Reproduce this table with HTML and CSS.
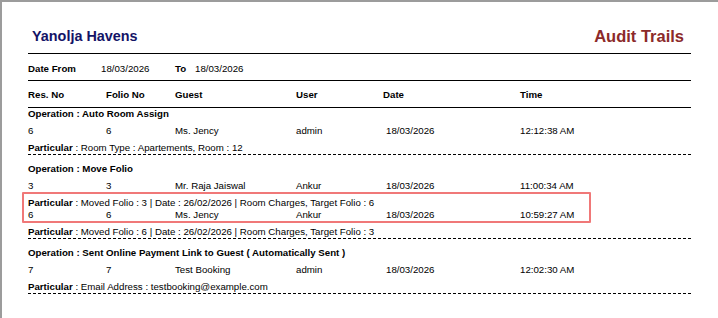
FILE: index.html
```html
<!DOCTYPE html>
<html lang="en">

<head>
    <meta charset="UTF-8">
    <meta name="viewport" content="width=device-width, initial-scale=1.0">
    <title>Audit Trails</title>
    <link rel="stylesheet" href="styles.css">
</head>

<body>
    <div class="page">
        <div class="report">
            <!-- Report header -->
            <div class="report-head">
                <h1 class="hotel-name">Yanolja Havens</h1>
                <h2 class="report-name">Audit Trails</h2>
            </div>

            <div class="filter-row">
                <span class="filter-label">Date From</span>
                <span class="filter-value">18/03/2026</span>
                <span class="filter-label to">To</span>
                <span>18/03/2026</span>
            </div>

            <div class="grid-row col-heads">
                <span>Res. No</span>
                <span>Folio No</span>
                <span>Guest</span>
                <span>User</span>
                <span>Date</span>
                <span>Time</span>
            </div>

            <div class="records">
                <!-- Auto Room Assign -->
                <div class="record first">
                    <div class="operation">Operation : Auto Room Assign</div>
                    <div class="grid-row data-row">
                        <span>6</span>
                        <span>6</span>
                        <span>Ms. Jency</span>
                        <span>admin</span>
                        <span class="date">18/03/2026</span>
                        <span>12:12:38 AM</span>
                    </div>
                    <div class="particular"><b>Particular</b> : Room Type : Apartements, Room : 12</div>
                </div>

                <!-- Move Folio -->
                <div class="record">
                    <div class="operation">Operation : Move Folio</div>
                    <div class="grid-row data-row">
                        <span>3</span>
                        <span>3</span>
                        <span>Mr. Raja Jaiswal</span>
                        <span>Ankur</span>
                        <span class="date">18/03/2026</span>
                        <span>11:00:34 AM</span>
                    </div>
                    <div class="particular no-rule"><b>Particular</b> : Moved Folio : 3 | Date : 26/02/2026 | Room Charges, Target Folio : 6</div>
                    <div class="grid-row data-row tight">
                        <span>6</span>
                        <span>6</span>
                        <span>Ms. Jency</span>
                        <span>Ankur</span>
                        <span class="date">18/03/2026</span>
                        <span>10:59:27 AM</span>
                    </div>
                    <div class="particular"><b>Particular</b> : Moved Folio : 6 | Date : 26/02/2026 | Room Charges, Target Folio : 3</div>
                    <div class="highlight"></div>
                </div>

                <!-- Payment link -->
                <div class="record">
                    <div class="operation">Operation : Sent Online Payment Link to Guest ( Automatically Sent )</div>
                    <div class="grid-row data-row">
                        <span>7</span>
                        <span>7</span>
                        <span>Test Booking</span>
                        <span>admin</span>
                        <span class="date">18/03/2026</span>
                        <span>12:02:30 AM</span>
                    </div>
                    <div class="particular"><b>Particular</b> : Email Address : testbooking@example.com</div>
                </div>
            </div>
        </div>
    </div>
</body>

</html>
```

FILE: styles.css
```css
body {
    margin: 0;
    padding: 0;
    font-family: "Liberation Sans", Arial, sans-serif;
    font-size: 9.7px;
    color: #000;
    background-color: #fff;
    overflow: hidden;
}

.page {
    border-top: 2px solid #9c9c9c;
    border-left: 2px solid #9c9c9c;
    height: 316px;
    background-color: #fff;
}

.report {
    width: 663px;
    padding-left: 26px;
}

.report-head {
    display: flex;
    justify-content: space-between;
    align-items: center;
    padding: 25px 7px 8px 4px;
    border-bottom: 1px solid #000;
}

.hotel-name {
    margin: 0;
    font-size: 14.4px;
    line-height: 18px;
    color: #141466;
}

.report-name {
    margin: 0;
    font-size: 16.5px;
    line-height: 18px;
    color: #8c2a2a;
}

.filter-row {
    display: flex;
    padding: 8px 0 5px;
    line-height: 13px;
    border-bottom: 1px solid #000;
}

.filter-label {
    font-weight: bold;
    width: 73px;
}

.filter-label.to {
    width: 20px;
}

.filter-value {
    width: 74px;
}

.grid-row {
    display: grid;
    grid-template-columns: 78px 69px 121px 87px 137px 1fr;
    line-height: 12px;
}

.col-heads {
    font-weight: bold;
    padding: 8px 0 6px;
    border-bottom: 1px solid #000;
}

.data-row {
    margin-top: 5px;
}

.data-row .date {
    padding-left: 3px;
}

.data-row.tight {
    margin-top: 0;
}

.record {
    position: relative;
    margin-top: 8px;
}

.record.first {
    margin-top: 0;
}

.operation {
    font-weight: bold;
    line-height: 12px;
}

.particular {
    margin-top: 5px;
    line-height: 12px;
    border-bottom: 1px dashed #000;
}

.particular.no-rule {
    border-bottom: none;
}

/* marker drawn over the first moved-folio particular and the row after it */
.highlight {
    position: absolute;
    top: 29px;
    left: -6px;
    width: 565px;
    height: 27px;
    border: 2px solid #f07878;
    border-radius: 1px;
}
```
